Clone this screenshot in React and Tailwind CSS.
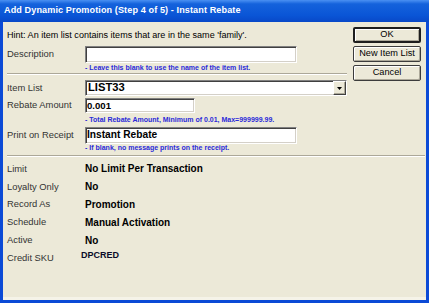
import React from "react";

const sunken =
  "border border-t-[#808080] border-l-[#808080] border-b-[#ffffff] border-r-[#ffffff] shadow-[inset_1px_1px_0_#404040,inset_-1px_-1px_0_#d4d0c8] bg-white";

function Button({ children, isDefault }) {
  return (
    <button
      className={`flex h-[16px] w-[68px] items-center justify-center rounded-[2px] bg-[#ECE9D8] text-[9.2px] leading-none text-black shadow-[inset_1px_1px_0_#ffffff,inset_-1px_-1px_0_#aca899] ${
        isDefault ? "border-2 border-[#1e1e1e]" : "border border-[#3c3c3c]"
      }`}
    >
      {children}
    </button>
  );
}

function BlueHint({ children, className = "" }) {
  return (
    <div
      className={`pl-[78px] text-[7px] font-bold text-[#2a2ad8] ${className}`}
    >
      {children}
    </div>
  );
}

function InfoRow({ label, value, sku }) {
  return (
    <div className="grid h-[17.8px] grid-cols-[78px_1fr] items-center">
      <span className="text-[9.4px] text-[#333333]">{label}</span>
      {sku ? (
        <span className="-ml-[4px] mb-[5px] text-[9px] font-bold text-[#0a0a28]">
          {value}
        </span>
      ) : (
        <span className="text-[10px] font-bold text-black">{value}</span>
      )}
    </div>
  );
}

export default function App() {
  const info = [
    ["Limit", "No Limit Per Transaction"],
    ["Loyalty Only", "No"],
    ["Record As", "Promotion"],
    ["Schedule", "Manual Activation"],
    ["Active", "No"],
  ];

  return (
    <div className="flex h-[303px] w-[429px] flex-col font-['Liberation_Sans',Arial,sans-serif]">
      <div className="flex h-[22px] items-center bg-[linear-gradient(to_bottom,#4a90f2_0%,#1462dc_18%,#0a55d6_70%,#0848c8_100%)] pl-[4px]">
        <span className="text-[9.1px] font-bold tracking-[0.1px] text-white">
          Add Dynamic Promotion (Step 4 of 5) - Instant Rebate
        </span>
      </div>

      <div className="flex flex-1 flex-col border-x-[3px] border-b-[3px] border-[#0b4ad6] bg-[#ECE9D8] pl-[4px]">
        <div className="flex">
          <div className="flex w-[340px] flex-col">
            <div className="h-[24px] pt-[8px] text-[9.05px] leading-[11px] text-black">
              Hint: An item list contains items that are in the same 'family'.
            </div>

            <div className="grid h-[17px] grid-cols-[78px_1fr] items-center">
              <span className="text-[9.4px] text-[#333333]">Description</span>
              <div className={`h-[17px] w-[212px] ${sunken}`} />
            </div>
            <BlueHint className="h-[9px] leading-[9px]">
              - Leave this blank to use the name of the item list.
            </BlueHint>

            <div className="h-[8px] pt-[1px]">
              <div className="border-t border-b border-t-[#aca899] border-b-white" />
            </div>

            <div className="grid h-[16px] grid-cols-[78px_1fr] items-center">
              <span className="text-[9.4px] text-[#333333]">Item List</span>
              <div
                className={`flex h-[16px] w-[262px] items-center justify-between ${sunken}`}
              >
                <span className="pl-[2px] text-[11.2px] font-bold leading-none text-black">
                  LIST33
                </span>
                <div className="flex h-[14px] w-[13px] items-center justify-center border border-t-white border-l-white border-b-[#404040] border-r-[#404040] bg-[#ECE9D8] shadow-[inset_-1px_-1px_0_#aca899]">
                  <svg width="5" height="3" viewBox="0 0 5 3">
                    <path d="M0 0h5L2.5 3z" fill="#000" />
                  </svg>
                </div>
              </div>
            </div>

            <div className="mt-[2px] grid h-[15px] grid-cols-[78px_1fr] items-center">
              <span className="text-[9.4px] text-[#333333]">Rebate Amount</span>
              <div className={`flex h-[15px] w-[110px] items-center ${sunken}`}>
                <span className="pl-[1px] text-[9.6px] font-bold leading-none text-black">
                  0.001
                </span>
              </div>
            </div>
            <BlueHint className="h-[14px] leading-[14px]">
              - Total Rebate Amount, Minimum of 0.01, Max=999999.99.
            </BlueHint>

            <div className="grid h-[17px] grid-cols-[78px_1fr] items-center">
              <span className="text-[9.4px] text-[#333333]">Print on Receipt</span>
              <div className={`flex h-[17px] w-[212px] items-center ${sunken}`}>
                <span className="pl-[1px] text-[10.2px] font-bold leading-none text-black">
                  Instant Rebate
                </span>
              </div>
            </div>
            <BlueHint className="h-[8px] leading-[8px]">
              - If blank, no message prints on the receipt.
            </BlueHint>
          </div>

          <div className="ml-[6px] flex flex-col gap-[3px] pt-[5px]">
            <Button isDefault>OK</Button>
            <Button>New Item List</Button>
            <Button>Cancel</Button>
          </div>
        </div>

        <div className="h-[8px] pt-[3px] pr-[1px]">
          <div className="border-t border-b border-t-[#aca899] border-b-white" />
        </div>

        <div className="flex flex-1 flex-col">
          {info.map(([label, value]) => (
            <InfoRow key={label} label={label} value={value} />
          ))}
          <InfoRow label="Credit SKU" value="DPCRED" sku />
        </div>

        <div className="-ml-[4px] h-[3px] bg-[#f5f3e8]" />
      </div>
    </div>
  );
}
